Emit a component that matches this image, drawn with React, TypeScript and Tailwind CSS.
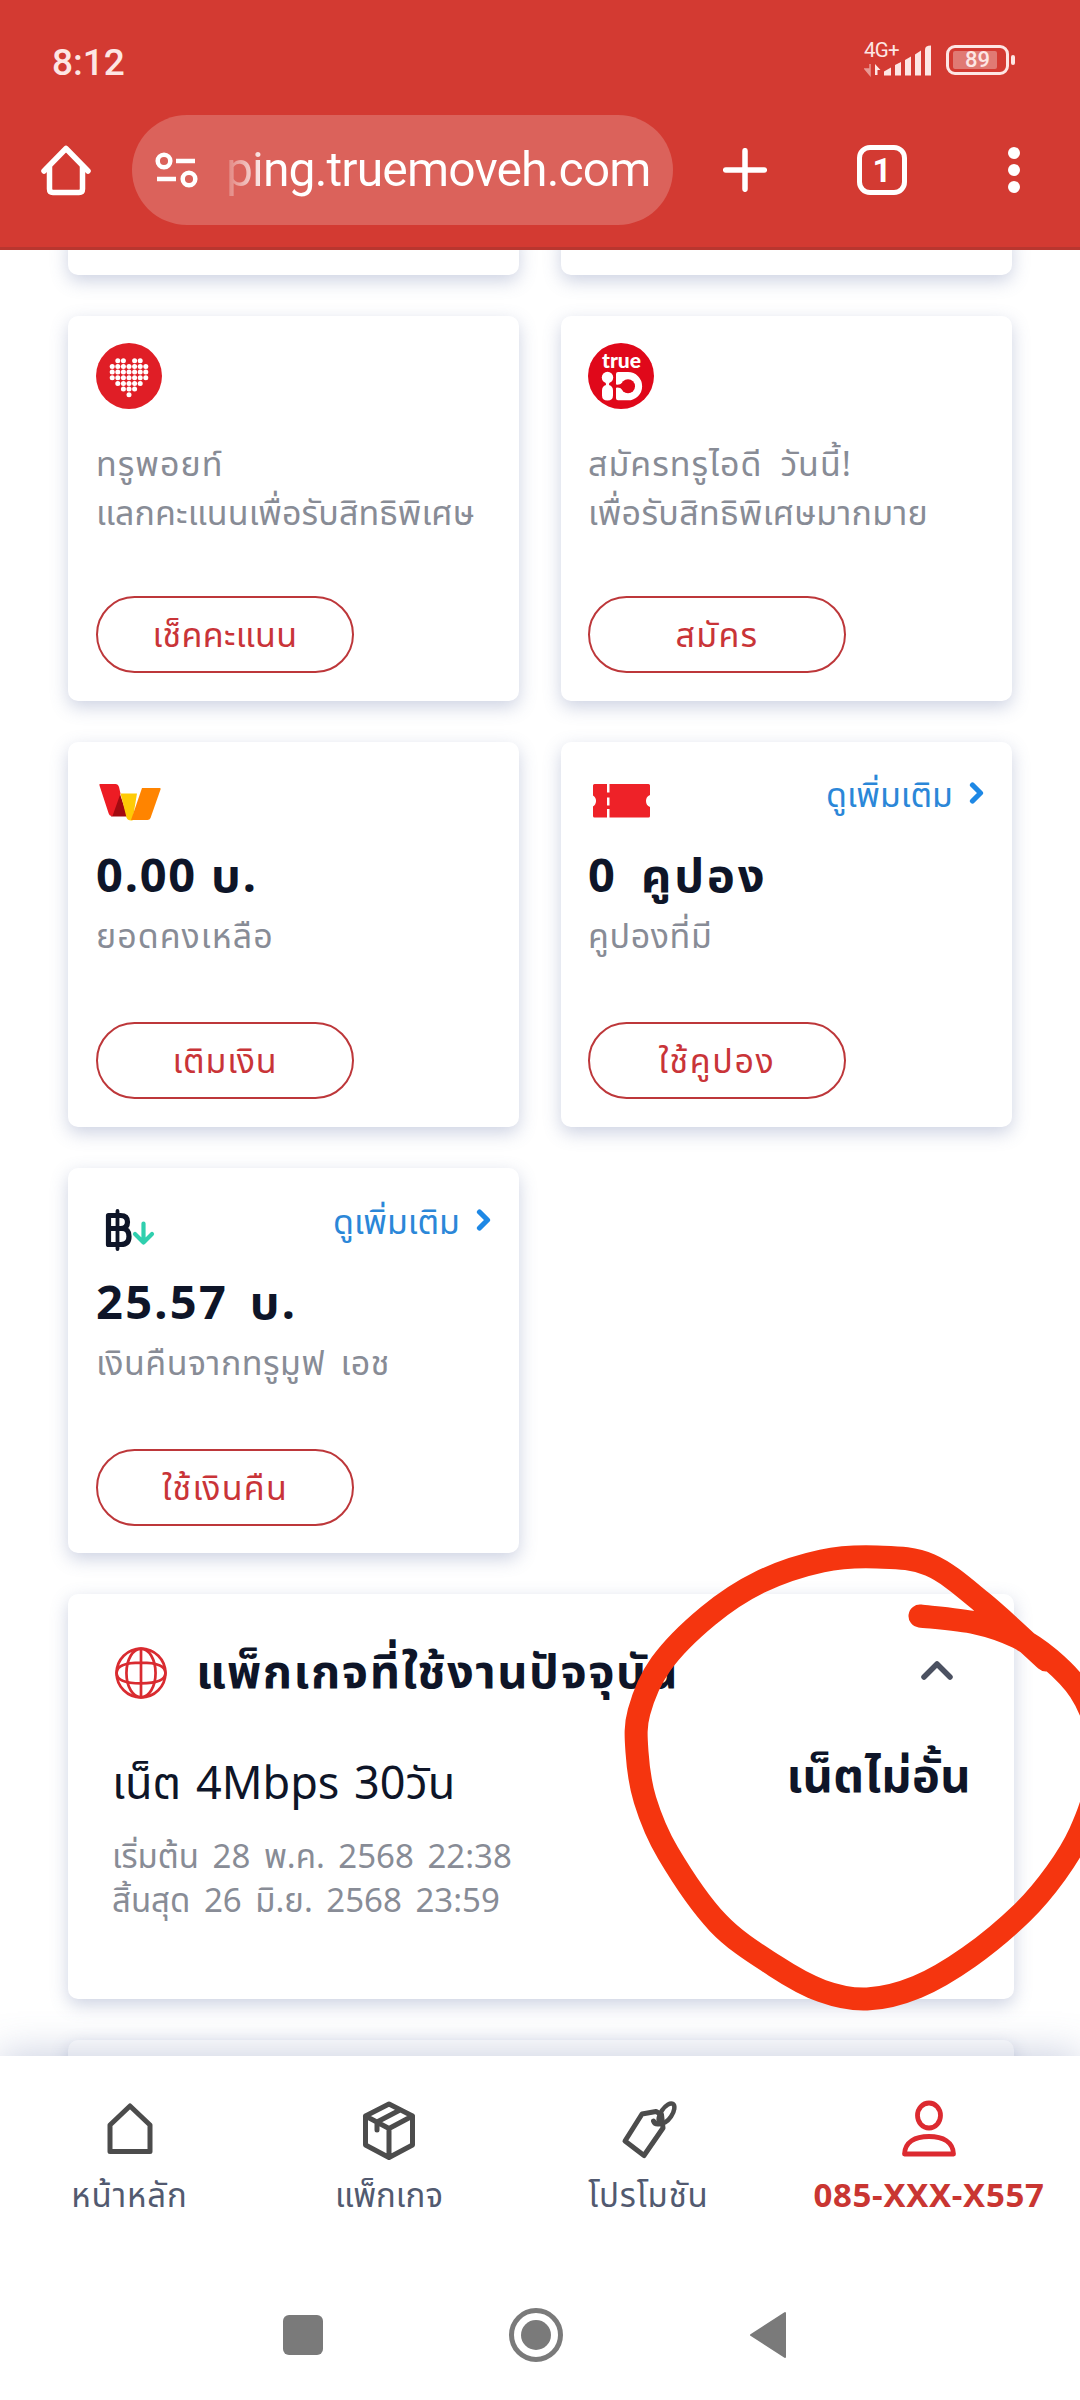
import type { ReactNode } from "react";

const thai = "font-['Noto_Sans','Noto_Sans_Thai',sans-serif]";

function StatusBar() {
  return (
    <div className="flex h-[80px] items-start justify-between pl-[52px] pr-[71px] font-['Roboto',sans-serif] text-[#fde6e4]">
      <span className="mt-[39px] text-[37px] font-medium leading-[48px]">8:12</span>
      <div className="mt-[40px] flex items-start">
        <div className="relative h-[38px] w-[70px]">
          <span className="absolute -top-[2px] left-0 text-[20.500px] leading-[24px] tracking-[-0.8px]">4G+</span>
          <svg width="70" height="38" viewBox="0 0 70 38" fill="#fde6e4">
            <path d="M6 24v11M6 35l-5-6h5z" stroke="#e99a95" strokeWidth="1.5" fill="#e99a95" />
            <path d="M11 35V24l5.500 6h-3v5z" />
            <path d="M20 35.500v-4l7-4v8z" />
            <path d="M31 35.500V25l6-3v13.500z" />
            <path d="M41 35.500V20l6-3.500v19z" />
            <path d="M51 35.500V14.500l6-4v25z" />
            <path d="M61 35.500V9.500q0-4 6-4v30z" />
          </svg>
        </div>
        <div className="relative ml-[12px] mt-[5px] flex h-[30px] w-[63px] items-center justify-center rounded-[9px] border-3 border-[#fde6e4]">
          <div className="absolute left-[4px] top-[3px] h-[18px] w-[44px] rounded-[2px] bg-[#e07a74]" />
          <span className="relative text-[22px] font-medium leading-none">89</span>
          <div className="absolute -right-[9px] top-[7px] h-[10px] w-[4px] rounded-full bg-[#fde6e4]" />
        </div>
      </div>
    </div>
  );
}

function BrowserBar() {
  return (
    <div className="flex h-[170px] items-center border-b-3 border-[#b8362f] pl-[39px]">
      <svg className="mt-[13px] shrink-0" width="54" height="54" viewBox="0 0 54 54" fill="none" stroke="#fff" strokeWidth="5.500" strokeLinecap="round" strokeLinejoin="round">
        <path d="M5 28 27 5.500 49 28" />
        <path d="M10.500 24v22q0 3.500 3.500 3.500h26q3.500 0 3.500-3.500V24" />
      </svg>
      <div className="mt-[13px] ml-[39px] flex h-[110px] w-[541px] items-center rounded-full bg-[#db625b] pl-[22px]">
        <svg className="shrink-0" width="44" height="36" viewBox="0 0 44 36" fill="none" stroke="#fff" strokeWidth="4.500">
          <circle cx="10" cy="9" r="6.300" />
          <path d="M22 9h19M3 27h19" />
          <circle cx="35" cy="27" r="6.300" />
        </svg>
        <span className="ml-[28px] bg-linear-to-r from-white/20 via-white via-10% to-white bg-clip-text font-['Roboto',sans-serif] text-[48px] leading-[64px] tracking-[-0.85px] whitespace-nowrap text-transparent">
          ping.truemoveh.com
        </span>
      </div>
      <svg className="mt-[13px] ml-[50px] shrink-0" width="44" height="44" viewBox="0 0 44 44" stroke="#fff" strokeWidth="5.500" strokeLinecap="round">
        <path d="M22 2.700v38.600M2.700 22h38.600" />
      </svg>
      <div className="mt-[13px] ml-[90px] flex h-[50px] w-[50px] shrink-0 items-center justify-center rounded-[13px] border-[5.500px] border-white font-['Roboto',sans-serif] text-[33px] font-bold leading-none text-white">
        1
      </div>
      <div className="mt-[13px] ml-[101px] flex shrink-0 flex-col gap-[5px]">
        <i className="size-[12px] rounded-full bg-white" />
        <i className="size-[12px] rounded-full bg-white" />
        <i className="size-[12px] rounded-full bg-white" />
      </div>
    </div>
  );
}

const heartRows = [
  [1, 2, 4, 5],
  [0, 1, 2, 3, 4, 5, 6],
  [0, 1, 2, 3, 4, 5, 6],
  [0, 1, 2, 3, 4, 5, 6],
  [1, 2, 3, 4, 5],
  [2, 3, 4],
  [3],
];

function PointIcon() {
  return (
    <svg width="66" height="66" viewBox="0 0 66 66">
      <circle cx="33" cy="33" r="33" fill="#e01e26" />
      {heartRows.map((cols, y) =>
        cols.map((x) => <circle key={`${x}-${y}`} cx={16.2 + x * 5.6} cy={17.8 + y * 5.65} r="2.500" fill="#fff" />),
      )}
    </svg>
  );
}

function TrueIdIcon() {
  return (
    <svg width="66" height="66" viewBox="0 0 66 66">
      <circle cx="33" cy="33" r="33" fill="#e0081a" />
      <text x="14" y="25" fontSize="20" fontWeight="900" fontFamily="Lato, sans-serif" fill="#fff" textLength="39" lengthAdjust="spacingAndGlyphs">
        true
      </text>
      <circle cx="19.500" cy="34.500" r="5.700" fill="#fff" />
      <path d="M17.500 38h4l-.5 4q4 1 4 5.500v5q0 5-5.500 5t-5.500-5v-5q0-4.500 4-5.500z" fill="#fff" />
      <path d="M30 29h10a14 14 0 0 1 0 28.300H30q-2 0-2-2V31q0-2 2-2z" fill="#fff" />
      <circle cx="40" cy="43.200" r="7" fill="#e0081a" />
      <path d="M27 41q3 2 8-1.500v7.500q-5-4-8-1.500z" fill="#e0081a" />
    </svg>
  );
}

function WalletIcon() {
  return (
    <svg width="66" height="66" viewBox="0 0 66 66">
      <path d="M23.500 23.500 31.500 47.500H15z" fill="#a30a10" />
      <path d="M3.500 15h16q2.500 0 3.500 3l1.500 6.500L16.500 47q-3 .5-4-3L3.500 16.500z" fill="#ed1c24" />
      <path d="M24.500 24.500h16.500l-4.500 27q-5 .5-6-3z" fill="#ffcb05" />
      <path d="M46 19h18q1 0 .5 1.500L54.500 49q-.8 2-3 2H35z" fill="#ff8400" />
    </svg>
  );
}

function CouponIcon() {
  return (
    <svg width="66" height="66" viewBox="0 0 66 66" fill="#ee2228">
      <path d="M6.500 15h12.500v8.500h2.500V15h39q1.500 0 1.500 1.500v9.500a6.500 6.500 0 0 0 0 12v9q0 1.500-1.500 1.500H21.500V40h-2.500v8.500H6.500Q5 48.500 5 47v-9.500a6.500 6.500 0 0 0 0-11V16.500Q5 15 6.500 15z" />
      <path d="M19 28.500h2.500v8H19z" fill="#fff" />
    </svg>
  );
}

function CashbackIcon() {
  return (
    <svg width="66" height="66" viewBox="0 0 66 66" fill="none" strokeLinecap="round" strokeLinejoin="round">
      <g stroke="#0e1528" strokeWidth="5.200">
        <path d="M12.500 19.500h12q7 0 7 6.500t-7 6.500h-12zM12.500 32.500h13.500q7 0 7 8t-8 8h-12.500z" />
        <path d="M21.500 15v38" strokeWidth="3.800" />
      </g>
      <path d="M47.500 27.500v19M39 38l8.500 8.500 8.500-8.500" stroke="#2fcfae" strokeWidth="4.200" />
    </svg>
  );
}

type CardProps = {
  icon: ReactNode;
  title?: string;
  titleClass?: string;
  lines: { text: string; className?: string }[];
  button: string;
  buttonClass?: string;
  padding?: string;
  more?: boolean;
};

const shadow = "shadow-[0_6px_18px_rgba(90,105,160,0.3)]";

function Card({ icon, title, titleClass = "", lines, button, buttonClass = "", padding = "pt-[27px] pb-[28px] pl-[28px]", more }: CardProps) {
  return (
    <div className={`flex h-[385px] w-[451px] flex-col rounded-[10px] bg-white pr-[28px] ${padding} ${shadow}`}>
      <div className="flex h-[66px] items-start justify-between">
        {icon}
        {more && (
          <div className="flex h-[50px] items-center text-[#2b87d8]">
            <span className="text-[34px] leading-[50px]">ดูเพิ่มเติม</span>
            <svg className="ml-[16px] -mt-[2px]" width="15" height="24" viewBox="0 0 15 24" fill="none" stroke="#1e88e5" strokeWidth="5.200" strokeLinecap="round" strokeLinejoin="round">
              <path d="M3.500 4 11.500 12l-8 8" />
            </svg>
          </div>
        )}
      </div>
      {title ? (
        <div className={`mt-[9px] mb-[7px] text-[47px] font-bold leading-[60px] whitespace-nowrap text-[#0e1528] ${titleClass}`}>{title}</div>
      ) : (
        <div className="h-[30px]" />
      )}
      {lines.map((line) => (
        <div key={line.text} className={`text-[34px] leading-[49px] whitespace-nowrap text-[#888c96] ${line.className ?? ""}`}>
          {line.text}
        </div>
      ))}
      <button className="mt-auto flex h-[77px] w-[258px] items-center justify-center rounded-full border-2 border-[#bd373a] text-[34px] leading-[49px] text-[#c93438]">
        <span className={`-mt-[1px] ${buttonClass}`}>{button}</span>
      </button>
    </div>
  );
}

function PackageCard() {
  return (
    <div className={`mt-[41px] flex h-[405px] w-[946px] shrink-0 flex-col rounded-[10px] bg-white pt-[54px] pr-[43px] pl-[44px] text-[#0e1528] ${shadow}`}>
      <div className="flex h-[50px] items-center">
        <svg className="ml-[3px]" width="52" height="52" viewBox="0 0 50 50" fill="none" stroke="#d92b30" strokeWidth="2.600">
          <circle cx="25" cy="25" r="23.500" />
          <ellipse cx="25" cy="25" rx="14" ry="23.500" />
          <path d="M25 1.500v47M1.500 25q0-10 23.500-10t23.500 10M1.500 25q0 10 23.500 10t23.500-10" />
        </svg>
        <h2 className="-mt-[7px] ml-[29px] text-[47px] font-bold leading-[60px] tracking-[1.5px] whitespace-nowrap">แพ็กเกจที่ใช้งานปัจจุบัน</h2>
        <svg className="mr-[17px] ml-auto -mt-[6px]" width="34" height="22" viewBox="0 0 34 22" fill="none" stroke="#4b5161" strokeWidth="5.500" strokeLinecap="round" strokeLinejoin="round">
          <path d="M4 18 17 5l13 13" />
        </svg>
      </div>
      <div className="mt-[46px] flex items-start justify-between">
        <div>
          <div className="mt-[8px] text-[45px] leading-[60px] whitespace-nowrap [word-spacing:3px]">เน็ต 4Mbps 30วัน</div>
          <div className="mt-[22px] text-[33px] leading-[44px] whitespace-nowrap text-[#888c96] [word-spacing:5px]">
            <div>เริ่มต้น 28 พ.ค. 2568 22:38</div>
            <div>สิ้นสุด 26 มิ.ย. 2568 23:59</div>
          </div>
        </div>
        <div className="text-[47px] font-bold leading-[60px] tracking-[0.4px] whitespace-nowrap">เน็ตไม่อั้น</div>
      </div>
    </div>
  );
}

const strokePoints: [number, number][] = [
  [920, 1616], [976, 1623], [1017, 1637], [1050, 1659], [1080, 1691], [1096, 1730], [1096, 1785], [1080, 1833],
  [1056, 1873], [1022, 1913], [969, 1957], [917, 1987], [867, 1999], [822, 1991], [775, 1966], [718, 1923],
  [668, 1853], [645, 1800], [637, 1752], [639, 1712], [661, 1664], [708, 1616], [760, 1582], [822, 1561],
  [877, 1557], [930, 1565], [983, 1603], [1046, 1660],
];

function smoothPath(points: [number, number][]) {
  let d = `M${points[0][0]} ${points[0][1]}`;
  for (let i = 0; i < points.length - 1; i++) {
    const a = points[Math.max(i - 1, 0)];
    const b = points[i];
    const c = points[i + 1];
    const e = points[Math.min(i + 2, points.length - 1)];
    d += `C${b[0] + (c[0] - a[0]) / 6} ${b[1] + (c[1] - a[1]) / 6} ${c[0] - (e[0] - b[0]) / 6} ${c[1] - (e[1] - b[1]) / 6} ${c[0]} ${c[1]}`;
  }
  return d;
}

function Marker() {
  return (
    <svg className="pointer-events-none absolute top-[1530px] left-[600px]" width="480" height="500" viewBox="600 1530 480 500" fill="none">
      <path d={smoothPath(strokePoints)} stroke="#f5350f" strokeWidth="23" strokeLinecap="round" strokeLinejoin="round" />
    </svg>
  );
}

function BottomNav() {
  const items = [
    {
      label: "หน้าหลัก",
      className: "tracking-[0.9px]",
      icon: <path d="M30 7 50 26v26.500H10V26z" />,
    },
    {
      label: "แพ็กเกจ",
      className: "",
      icon: <path d="M30 5 53.500 17v29L30 58.500 6.500 46V17zM6.500 17 30 29.500 53.500 17M30 29.500v29M41 11 18 23v8" />,
    },
    {
      label: "โปรโมชัน",
      className: "tracking-[0.8px]",
      icon: (
        <g>
          <path d="M6 42 23 15l14-2.500 5.500 3 1.500 13.500L25 56.500z" />
          <ellipse cx="47.500" cy="14.500" rx="5.500" ry="11.500" transform="rotate(34 47.500 14.500)" strokeWidth="4.500" />
          <path d="M34.500 22q1.500 4 7 2.500" />
        </g>
      ),
    },
  ];
  return (
    <nav className="relative z-10 grid h-[204px] grid-cols-[259px_260px_259px_302px] bg-white pt-[43px] text-[33px] leading-[44px] text-[#525a70] shadow-[0_-4px_36px_rgba(90,105,160,0.3)]">
      {items.map((item) => (
        <div key={item.label} className="flex flex-col items-center">
          <svg width="60" height="62" viewBox="0 0 60 62" fill="none" stroke="#4c4c4c" strokeWidth="5" strokeLinejoin="round" strokeLinecap="round">
            {item.icon}
          </svg>
          <span className={`mt-[12px] whitespace-nowrap ${item.className}`}>{item.label}</span>
        </div>
      ))}
      <div className="flex flex-col items-center">
        <svg width="60" height="62" viewBox="0 0 60 62" fill="none" stroke="#dc2a30" strokeWidth="4.800" strokeLinejoin="round">
          <ellipse cx="30" cy="16.500" rx="11.500" ry="12.500" />
          <path d="M5.500 55C6 43 16 37.500 30 37.500S54 43 54.500 55z" />
        </svg>
        <span className="mt-[12px] font-bold tracking-[0.7px] whitespace-nowrap text-[#c93632]">085-XXX-X557</span>
      </div>
    </nav>
  );
}

function SystemBar() {
  return (
    <div className="relative z-10 flex h-[140px] items-center bg-white pt-[9px] pl-[283px]">
      <div className="size-[40px] rounded-[6px] bg-[#7a7a7a]" />
      <div className="ml-[186px] flex size-[54px] items-center justify-center rounded-full border-[5px] border-[#7a7a7a]">
        <div className="size-[30px] rounded-full bg-[#7a7a7a]" />
      </div>
      <svg className="ml-[185px]" width="40" height="48" viewBox="0 0 40 48" fill="#7a7a7a" stroke="#7a7a7a" strokeWidth="2" strokeLinejoin="round">
        <path d="M3 24 37 2v44z" />
      </svg>
    </div>
  );
}

export default function App() {
  return (
    <div lang="th" className={`relative flex h-[2400px] w-[1080px] flex-col overflow-hidden bg-white ${thai}`}>
      <header className="relative z-10 bg-[#d33a32]">
        <StatusBar />
        <BrowserBar />
      </header>
      <main className="flex h-[1806px] flex-col items-start overflow-hidden bg-white pl-[68px]">
        <div className="grid grid-cols-[451px_451px] gap-x-[42px] gap-y-[41px]">
          <div className={`-mt-[20px] h-[45px] rounded-[10px] bg-white ${shadow}`} />
          <div className={`-mt-[20px] h-[45px] rounded-[10px] bg-white ${shadow}`} />
          <Card
            icon={<PointIcon />}
            lines={[{ text: "ทรูพอยท์", className: "tracking-[1px]" }, { text: "แลกคะแนนเพื่อรับสิทธิพิเศษ", className: "tracking-[0.1px]" }]}
            button="เช็คคะแนน"
            buttonClass="tracking-[0.3px]"
          />
          <Card
            icon={<TrueIdIcon />}
            padding="pt-[27px] pb-[28px] pl-[27px]"
            lines={[
              { text: "สมัครทรูไอดี วันนี้!", className: "tracking-[1px] [word-spacing:8px]" },
              { text: "เพื่อรับสิทธิพิเศษมากมาย", className: "tracking-[0.3px]" },
            ]}
            button="สมัคร"
            buttonClass="tracking-[1.3px]"
          />
          <Card
            icon={<WalletIcon />}
            title="0.00 บ."
            titleClass="tracking-[1.8px]"
            lines={[{ text: "ยอดคงเหลือ", className: "tracking-[1px]" }]}
            button="เติมเงิน"
            buttonClass="tracking-[0.8px]"
          />
          <Card
            icon={<CouponIcon />}
            padding="pt-[27px] pb-[28px] pl-[27px]"
            title="0 คูปอง"
            titleClass="tracking-[2.9px] [word-spacing:8px]"
            lines={[{ text: "คูปองที่มี", className: "tracking-[0.6px]" }]}
            button="ใช้คูปอง"
            buttonClass="tracking-[1.6px]"
            more
          />
          <Card
            icon={<CashbackIcon />}
            padding="pt-[28px] pb-[27px] pl-[28px]"
            title="25.57 บ."
            titleClass="tracking-[2.3px] [word-spacing:7px]"
            lines={[{ text: "เงินคืนจากทรูมูฟ เอช", className: "tracking-[0.5px] [word-spacing:6px]" }]}
            button="ใช้เงินคืน"
            buttonClass="tracking-[1.2px]"
            more
          />
        </div>
        <PackageCard />
        <div className={`mt-[41px] h-[200px] w-[946px] shrink-0 rounded-[10px] bg-white ${shadow}`} />
      </main>
      <Marker />
      <BottomNav />
      <SystemBar />
    </div>
  );
}
